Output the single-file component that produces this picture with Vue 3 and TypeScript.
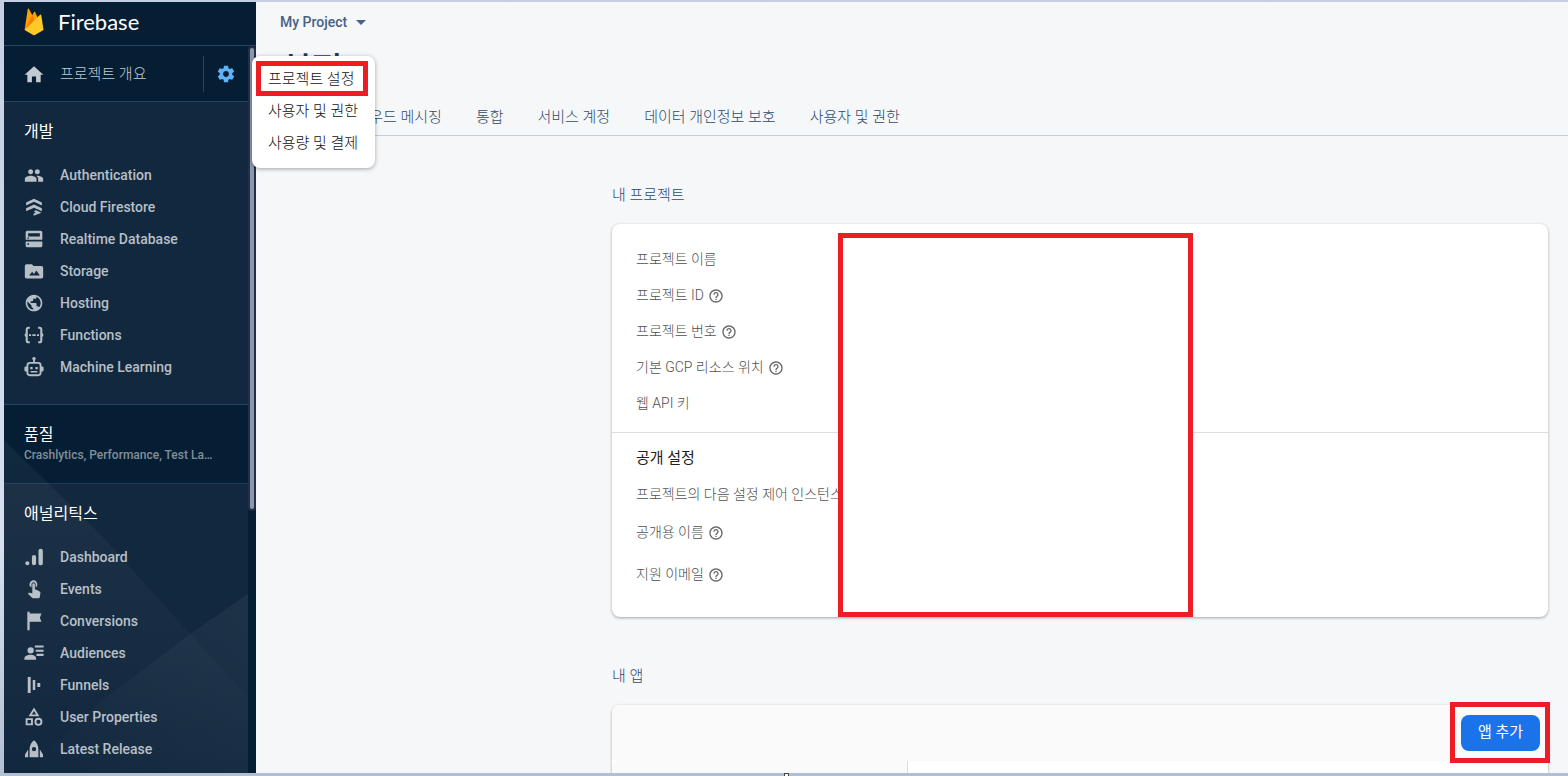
<script setup lang="ts">
interface NavItem {
  label: string
  icon: string
}

interface InfoRow {
  label: string
  help: boolean
}

const developItems: NavItem[] = [
  {
    label: 'Authentication',
    icon: 'M16 11c1.66 0 2.99-1.34 2.99-3S17.66 5 16 5c-1.66 0-3 1.34-3 3s1.34 3 3 3zm-8 0c1.66 0 2.99-1.34 2.99-3S9.66 5 8 5C6.34 5 5 6.34 5 8s1.34 3 3 3zm0 2c-2.33 0-7 1.17-7 3.5V20h14v-3.5c0-2.33-4.67-3.5-7-3.5zm8 0c-.29 0-.62.02-.97.05 1.16.84 1.97 1.97 1.97 3.45V20h6v-3.5c0-2.33-4.67-3.5-7-3.5z',
  },
  {
    label: 'Cloud Firestore',
    icon: 'M2.5 6.5 12 2l9.500 4.500v3.700L12 5.800 2.500 10.200zM2.500 13.500 12 9l9.500 4.500v3.700L12 12.800 2.500 17.200zM11.500 17.200l3-1.400 6.500 3L11.500 22.500v-2.300l2.500-1.500z',
  },
  {
    label: 'Realtime Database',
    icon: 'M4 2h16a2 2 0 0 1 2 2v9H2V4a2 2 0 0 1 2-2zm1 3v4h14V5zm-1 5.300v1.400h2v-1.400zM2 15h20v5a2 2 0 0 1-2 2H4a2 2 0 0 1-2-2zm2 2v2h2v-2z',
  },
  {
    label: 'Storage',
    icon: 'M3 4h6.500l2 2H21a2 2 0 0 1 2 2v11a2 2 0 0 1-2 2H3a2 2 0 0 1-2-2V6a2 2 0 0 1 2-2zM6 17.500h13l-4.200-6-2.800 4-2.200-2.500z',
  },
  {
    label: 'Hosting',
    icon: 'M12 2C6.480 2 2 6.480 2 12s4.480 10 10 10 10-4.480 10-10S17.520 2 12 2zm-1 17.930c-3.950-.490-7-3.850-7-7.930 0-.620.080-1.210.210-1.790L9 15v1c0 1.100.900 2 2 2v1.930zm6.900-2.540c-.260-.810-1-1.390-1.900-1.390h-1v-3c0-.550-.450-1-1-1H8v-2h2c.550 0 1-.450 1-1V7h2c1.100 0 2-.900 2-2v-.410c2.930 1.190 5 4.060 5 7.410 0 2.080-.800 3.970-2.100 5.390z',
  },
  {
    label: 'Functions',
    icon: 'M7 2H5.500A3.500 3.500 0 0 0 2 5.500v4L.5 12 2 14.500v4A3.500 3.500 0 0 0 5.500 22H7v-2.500H5.500a1 1 0 0 1-1-1v-13a1 1 0 0 1 1-1H7zM17 2h1.500A3.500 3.500 0 0 1 22 5.500v4l1.500 2.500-1.500 2.500v4a3.500 3.500 0 0 1-3.500 3.500H17v-2.500h1.500a1 1 0 0 0 1-1v-13a1 1 0 0 0-1-1H17zM6 11h2.500v2.200H6zM10 11h4v2.200h-4zM15.500 11H18v2.200h-2.500z',
  },
  {
    label: 'Machine Learning',
    icon: 'M12 0a2 2 0 0 1 1.100 3.700V6H17a4 4 0 0 1 4 4v1.500h1a1.500 1.500 0 0 1 1.500 1.500v3a1.500 1.500 0 0 1-1.500 1.500h-1V19a4 4 0 0 1-4 4H7a4 4 0 0 1-4-4v-1.500H2A1.500 1.500 0 0 1 .5 16v-3A1.500 1.500 0 0 1 2 11.500h1V10a4 4 0 0 1 4-4h3.900V3.700A2 2 0 0 1 12 0zM7 8.200A1.800 1.800 0 0 0 5.200 10v9A1.800 1.800 0 0 0 7 20.800h10a1.800 1.800 0 0 0 1.800-1.800v-9A1.800 1.800 0 0 0 17 8.200zM7.500 12h2.800v2.800H7.500zM13.700 12h2.800v2.800h-2.800zM8 16.700h8v1.800H8z',
  },
]

const analyticsItems: NavItem[] = [
  {
    label: 'Dashboard',
    icon: 'M4 17a2.500 2.500 0 1 1 0 5 2.500 2.500 0 0 1 0-5zM12 9.500a2.500 2.500 0 0 1 2.500 2.500v7.500a2.500 2.500 0 0 1-5 0V12A2.500 2.500 0 0 1 12 9.500zM20 2a2.600 2.600 0 0 1 2.600 2.600v14.800a2.600 2.600 0 0 1-5.200 0V4.600A2.600 2.600 0 0 1 20 2z',
  },
  {
    label: 'Events',
    icon: 'M9 10.240V6.500C9 5.120 10.120 4 11.500 4S14 5.120 14 6.500v3.740c1.210-.810 2-2.180 2-3.740C16 4.010 13.990 1.500 11.500 1.500S6.500 4.010 6.500 6.500c0 1.560 1.290 2.930 2.500 3.740zm9.840 4.630l-4.540-2.260c-.170-.070-.350-.110-.540-.110H13v-6c0-.830-.670-1.500-1.500-1.500S10 5.670 10 6.500v10.740l-3.430-.720c-.080-.010-.150-.030-.240-.030-.310 0-.590.130-.790.330l-.790.800 4.940 4.940c.270.270.650.440 1.060.440h6.790c.750 0 1.330-.550 1.440-1.280l.750-5.270c.010-.070.020-.140.020-.200 0-.620-.380-1.160-.910-1.380z',
  },
  {
    label: 'Conversions',
    icon: 'M4 1h2.800v2H21l-2 5 2 5H6.800v10H4z',
  },
  {
    label: 'Audiences',
    icon: 'M8 5a3.800 3.800 0 1 1 0 7.600A3.800 3.800 0 0 1 8 5zM.5 20v-1.800C.5 15.700 4.500 14 8 14s6.500 1.700 6.500 4.200V20zM13 3h10.500v2.500H13zM14 8h9.500v2.500H14zM15 13h8.500v2.500H15z',
  },
  {
    label: 'Funnels',
    icon: 'M4.500 2.500H8v19H4.500zM10.500 6h3v12h-3zM16 9.500h3.500v5H16z',
  },
  {
    label: 'User Properties',
    icon: 'M12 .5 18.500 11h-13zM12 4.700 9.400 9h5.200zM2 13.500h8.700V22H2zM4.200 15.700v4.100h4.200v-4.100zM17.300 13a4.800 4.800 0 1 1 0 9.600 4.800 4.800 0 0 1 0-9.600zM17.300 15.300a2.500 2.500 0 1 0 0 5 2.500 2.500 0 0 0 0-5z',
  },
  {
    label: 'Latest Release',
    icon: 'M12 1.500C15.500 4 17.300 8 17.300 12.500V22H6.700v-9.500C6.700 8 8.500 4 12 1.500zM12 9.500a2.600 2.600 0 1 0 0 5.200 2.600 2.600 0 0 0 0-5.200zM5 12.500V22H1.200v-3.500zM19 12.500V22h3.800v-3.500z',
  },
]

const menuItems: string[] = ['프로젝트 설정', '사용자 및 권한', '사용량 및 결제']

const tabs: string[] = ['일반', '클라우드 메시징', '통합', '서비스 계정', '데이터 개인정보 보호', '사용자 및 권한']

const projectRows: InfoRow[] = [
  { label: '프로젝트 이름', help: false },
  { label: '프로젝트 ID', help: true },
  { label: '프로젝트 번호', help: true },
  { label: '기본 GCP 리소스 위치', help: true },
  { label: '웹 API 키', help: false },
]

const publicRows: InfoRow[] = [
  { label: '공개용 이름', help: true },
  { label: '지원 이메일', help: true },
]

const helpIcon =
  'M11 18h2v-2h-2v2zm1-16C6.480 2 2 6.480 2 12s4.480 10 10 10 10-4.480 10-10S17.520 2 12 2zm0 18c-4.410 0-8-3.590-8-8s3.590-8 8-8 8 3.590 8 8-3.590 8-8 8zm0-14c-2.210 0-4 1.790-4 4h2c0-1.100.900-2 2-2s2 .900 2 2c0 2-3 1.750-3 5h2c0-2.250 3-2.500 3-5 0-2.210-1.790-4-4-4z'

const gearIcon =
  'M19.430 12.980c.040-.320.070-.640.070-.980s-.030-.660-.070-.980l2.110-1.650c.190-.150.240-.420.120-.640l-2-3.460c-.120-.220-.390-.300-.610-.220l-2.490 1c-.520-.400-1.080-.730-1.690-.980l-.380-2.650C14.460 2.180 14.250 2 14 2h-4c-.250 0-.460.180-.490.420l-.380 2.650c-.610.250-1.170.590-1.690.980l-2.490-1c-.230-.090-.490 0-.610.220l-2 3.460c-.130.220-.070.490.120.640l2.110 1.650c-.040.320-.070.650-.070.980s.030.660.070.980l-2.110 1.650c-.190.150-.240.420-.120.640l2 3.460c.120.220.390.300.610.220l2.490-1c.520.400 1.080.730 1.690.980l.380 2.650c.030.240.240.420.490.420h4c.250 0 .460-.180.490-.420l.380-2.650c.610-.250 1.170-.590 1.690-.980l2.490 1c.230.090.490 0 .610-.220l2-3.460c.120-.220.070-.490-.120-.640l-2.110-1.650zM12 15.500c-1.930 0-3.500-1.570-3.500-3.500s1.570-3.500 3.500-3.500 3.500 1.570 3.500 3.500-1.570 3.500-3.500 3.500z'
</script>

<template>
  <div class="frame">
    <aside class="sidebar">
      <a class="brand" href="#">
        <svg class="flame" viewBox="0 0 20 28" aria-hidden="true">
          <path fill="#ffa000" d="M.6 22 3.700 1.200c.1-.7 1-.8 1.300-.3l3.300 6.300L10 4.100c.3-.5.9-.5 1.100 0L19.400 22z" />
          <path fill="#f57c00" d="M11.800 14.500 8.300 7.200.6 22z" />
          <path fill="#ffca28" d="M19.500 22 17.300 7.200c-.1-.6-.8-.8-1.200-.4L.6 22l8.600 5c.5.3 1.200.3 1.700 0z" />
        </svg>
        <span class="wordmark">Firebase</span>
      </a>
      <div class="side-body">
        <div class="side-scroll">
          <div class="overview">
            <a class="overview-link" href="#">
              <svg class="icon" viewBox="0 0 24 24" aria-hidden="true">
                <path d="M9.500 22v-7h5v7H20v-9h3.200L12 2.800 .8 13H4v9z" />
              </svg>
              <span>프로젝트 개요</span>
            </a>
            <button class="gear" type="button" aria-label="설정">
              <svg class="icon" viewBox="0 0 24 24" aria-hidden="true"><path :d="gearIcon" /></svg>
            </button>
          </div>
          <nav class="group develop">
            <h2 class="group-title">개발</h2>
            <a v-for="item in developItems" :key="item.label" class="nav-item" href="#">
              <svg class="icon" viewBox="0 0 24 24" aria-hidden="true">
                <path fill-rule="evenodd" :d="item.icon" />
              </svg>
              <span>{{ item.label }}</span>
            </a>
          </nav>
          <a class="quality" href="#">
            <span class="quality-title">품질</span>
            <span class="quality-sub">Crashlytics, Performance, Test La…</span>
          </a>
          <nav class="group analytics">
            <h2 class="group-title">애널리틱스</h2>
            <a v-for="item in analyticsItems" :key="item.label" class="nav-item" href="#">
              <svg class="icon" viewBox="0 0 24 24" aria-hidden="true">
                <path fill-rule="evenodd" :d="item.icon" />
              </svg>
              <span>{{ item.label }}</span>
            </a>
          </nav>
          <svg class="facets" viewBox="0 0 244 333" preserveAspectRatio="none" aria-hidden="true">
            <defs>
              <linearGradient id="facet-left" x1="0" y1="0" x2="0" y2="1">
                <stop offset="0" stop-color="#fff" stop-opacity="0.05" />
                <stop offset="1" stop-color="#fff" stop-opacity="0" />
              </linearGradient>
              <linearGradient id="facet-right" x1="1" y1="0" x2="0" y2="1">
                <stop offset="0" stop-color="#fff" stop-opacity="0.05" />
                <stop offset="1" stop-color="#fff" stop-opacity="0" />
              </linearGradient>
            </defs>
            <path fill="url(#facet-left)" d="M0 0 97 95 186 194 244 257V333H0z" />
            <path fill="url(#facet-right)" d="M244 154 186 194 96 262 20 333H244z" />
          </svg>
        </div>
        <div class="track"><div class="thumb"></div></div>
      </div>
      <div class="menu" role="menu">
        <button
          v-for="(item, i) in menuItems"
          :key="item"
          type="button"
          role="menuitem"
          :class="['menu-item', { marked: i === 0 }]"
        >{{ item }}</button>
      </div>
    </aside>

    <main class="main">
      <header class="top">
        <button class="project" type="button">
          <span>My Project</span>
          <svg class="caret" viewBox="0 0 10 5" aria-hidden="true"><path d="M0 0h10L5 5z" /></svg>
        </button>
        <h1 class="title">설정</h1>
        <nav class="tabs">
          <a v-for="tab in tabs" :key="tab" class="tab" href="#">{{ tab }}</a>
        </nav>
      </header>

      <div class="content">
        <h2 class="section-title">내 프로젝트</h2>
        <section class="card">
          <div class="details">
            <div v-for="row in projectRows" :key="row.label" class="row">
              <span>{{ row.label }}</span>
              <svg v-if="row.help" class="help" viewBox="0 0 24 24" aria-hidden="true"><path :d="helpIcon" /></svg>
            </div>
          </div>
          <div class="public">
            <h3 class="public-title">공개 설정</h3>
            <p class="public-text">프로젝트의 다음 설정 제어 인스턴스</p>
            <div v-for="row in publicRows" :key="row.label" class="row public-row">
              <span>{{ row.label }}</span>
              <svg v-if="row.help" class="help" viewBox="0 0 24 24" aria-hidden="true"><path :d="helpIcon" /></svg>
            </div>
          </div>
          <div class="cover" aria-hidden="true"></div>
        </section>

        <h2 class="section-title">내 앱</h2>
        <section class="card apps">
          <div class="apps-bar">
            <div class="add-wrap"><button class="add" type="button">앱 추가</button></div>
          </div>
          <div class="apps-body">
            <div class="apps-list"></div>
            <div class="apps-detail"></div>
          </div>
        </section>
      </div>
    </main>
    <span class="handle" aria-hidden="true"></span>
  </div>
</template>

<style>
body {
  background: #c5cfe2;
}
</style>

<style scoped>
.frame,
.frame * {
  box-sizing: border-box;
}

.frame {
  position: relative;
  display: flex;
  height: 100vh;
  padding: 2px 0 3px 4px;
  overflow: hidden;
  background: linear-gradient(#c5cee3, #d6e0ef 70%, #b2bed2 100%);
  font-family: Roboto, "Noto Sans CJK KR", sans-serif;
  font-size: 15px;
  font-weight: 300;
  line-height: 24px;
}

h1,
h2,
h3,
p {
  margin: 0;
  font-weight: 400;
}

a {
  color: inherit;
  text-decoration: none;
}

button {
  border: 0;
  padding: 0;
  background: none;
  color: inherit;
  font: inherit;
  cursor: pointer;
}

.icon {
  flex: none;
  width: 20px;
  height: 20px;
  fill: currentColor;
}

.sidebar {
  position: relative;
  z-index: 2;
  display: flex;
  flex: none;
  flex-direction: column;
  width: 252px;
  background: #051e34;
  color: #b7bfc6;
}

.brand {
  display: flex;
  flex: none;
  align-items: center;
  gap: 14px;
  height: 44px;
  padding: 0 20px 4px;
  border-bottom: 1px solid #274460;
  color: #fff;
}

.flame {
  width: 20px;
  height: 28px;
}

.wordmark {
  font-family: Lato, sans-serif;
  font-size: 22px;
  font-weight: 400;
}

.side-body {
  display: flex;
  flex: 1;
  min-height: 0;
}

.side-scroll {
  position: relative;
  flex: 1;
  min-width: 0;
  overflow: hidden;
}

.track {
  flex: none;
  width: 8px;
}

.thumb {
  height: 64%;
  border: 2px solid #262f42;
  border-radius: 4px;
  background: #8b98b4;
}

.facets {
  position: absolute;
  bottom: 0;
  left: 0;
  width: 100%;
  height: 333px;
  pointer-events: none;
}

.overview {
  display: flex;
  align-items: center;
  height: 56px;
  border-bottom: 1px solid #274460;
}

.overview-link {
  display: flex;
  flex: 1;
  align-items: center;
  gap: 16px;
  padding-left: 20px;
  color: #c3cad0;
}

.gear {
  display: flex;
  align-items: center;
  justify-content: center;
  width: 45px;
  height: 36px;
  border-left: 1px solid #274460;
  color: #5eb2f5;
}

.group {
  padding-top: 18px;
  background: #12283e;
}

.develop {
  padding-bottom: 21px;
}

.analytics {
  padding-bottom: 32px;
}

.group-title {
  height: 39px;
  padding-left: 20px;
  color: #fff;
  font-size: 16px;
}

.nav-item {
  display: flex;
  align-items: center;
  gap: 16px;
  height: 32px;
  padding-left: 20px;
  font-size: 14px;
  font-weight: 500;
}

.quality {
  display: flex;
  flex-direction: column;
  height: 80px;
  padding: 20px 24px 0 20px;
  border-top: 1px solid #274460;
  border-bottom: 1px solid #1c3c5a;
}

.quality-title {
  color: #fff;
  font-size: 16px;
  font-weight: 400;
  line-height: 20px;
}

.quality-sub {
  color: #828f99;
  font-size: 12px;
  font-weight: 500;
  line-height: 20px;
  white-space: nowrap;
}

.menu {
  position: absolute;
  top: 54px;
  left: 248px;
  display: flex;
  flex-direction: column;
  width: 123px;
  padding: 6px 0 10px;
  border-radius: 8px;
  background: #fff;
  box-shadow: 0 1px 4px rgba(0, 0, 0, 0.35);
  color: #111;
}

.menu-item {
  position: relative;
  height: 32px;
  padding: 2px 0 0 16px;
  text-align: left;
  white-space: nowrap;
}

.marked::after {
  position: absolute;
  inset: -1px 7px -2px 4px;
  border: 5px solid #ee1c24;
  content: "";
}

.main {
  flex: 1;
  min-width: 0;
  overflow: hidden;
  background: #f6f7f9;
}

.top {
  border-bottom: 1px solid #c2cfde;
  color: #476282;
}

.project {
  display: flex;
  align-items: center;
  gap: 9px;
  height: 40px;
  padding-left: 24px;
  font-size: 14px;
  font-weight: 500;
}

.caret {
  width: 10px;
  height: 5px;
  fill: currentColor;
}

.title {
  height: 56px;
  padding: 4px 0 0 24px;
  color: #1c3d5e;
  font-size: 34px;
  font-weight: 500;
  line-height: 48px;
}

.tabs {
  display: flex;
  gap: 34px;
  height: 37px;
  padding: 7px 24px 0;
}

.tab {
  color: #2c4a70;
  white-space: nowrap;
}

.content {
  padding: 0 20px 0 356px;
}

.section-title {
  padding: 47px 0 17px;
  color: #2c4a70;
  font-size: 15px;
  font-weight: 300;
}

.card {
  position: relative;
  border-radius: 8px;
  background: #fff;
  box-shadow: 0 1px 3px rgba(0, 0, 0, 0.35);
  color: #505050;
  font-size: 14px;
}

.details {
  padding: 17px 24px 11px;
}

.row {
  display: flex;
  align-items: center;
  gap: 4px;
  height: 36px;
}

.help {
  width: 16px;
  height: 16px;
  margin-top: 2px;
  fill: #666;
}

.public {
  padding: 13px 24px 22px;
  border-top: 1px solid #dedede;
}

.public-title {
  color: #212121;
  font-size: 15px;
}

.public-text {
  padding: 12px 0 5px;
  font-weight: 300;
}

.public-row {
  height: 42px;
}

.cover {
  position: absolute;
  top: 9px;
  bottom: 0;
  left: 226px;
  width: 355px;
  border: 5px solid #ee1c24;
  background: #fff;
}

.apps {
  height: 200px;
}

.apps-bar {
  display: flex;
  align-items: center;
  justify-content: flex-end;
  height: 56px;
  padding-right: 8px;
  border-radius: 8px 8px 0 0;
  background: #fafafa;
}

.add-wrap {
  position: relative;
}

.add-wrap::after {
  position: absolute;
  inset: -13px -10px -12px -11px;
  border: 5px solid #ee1c24;
  content: "";
  pointer-events: none;
}

.add {
  display: block;
  min-width: 79px;
  height: 36px;
  padding: 0 16px 2px;
  border-radius: 8px;
  background: #1a73e8;
  color: #fff;
  font-size: 15px;
  font-weight: 400;
}

.apps-body {
  display: flex;
  height: 144px;
}

.apps-list {
  width: 296px;
  border-right: 1px solid #dadada;
  border-radius: 8px 0 0;
  background: #fafafa;
}

.apps-detail {
  flex: 1;
}

.handle {
  position: absolute;
  bottom: -2px;
  left: 50%;
  width: 5px;
  height: 5px;
  border: 1px solid #444;
  background: #fff;
}
</style>
